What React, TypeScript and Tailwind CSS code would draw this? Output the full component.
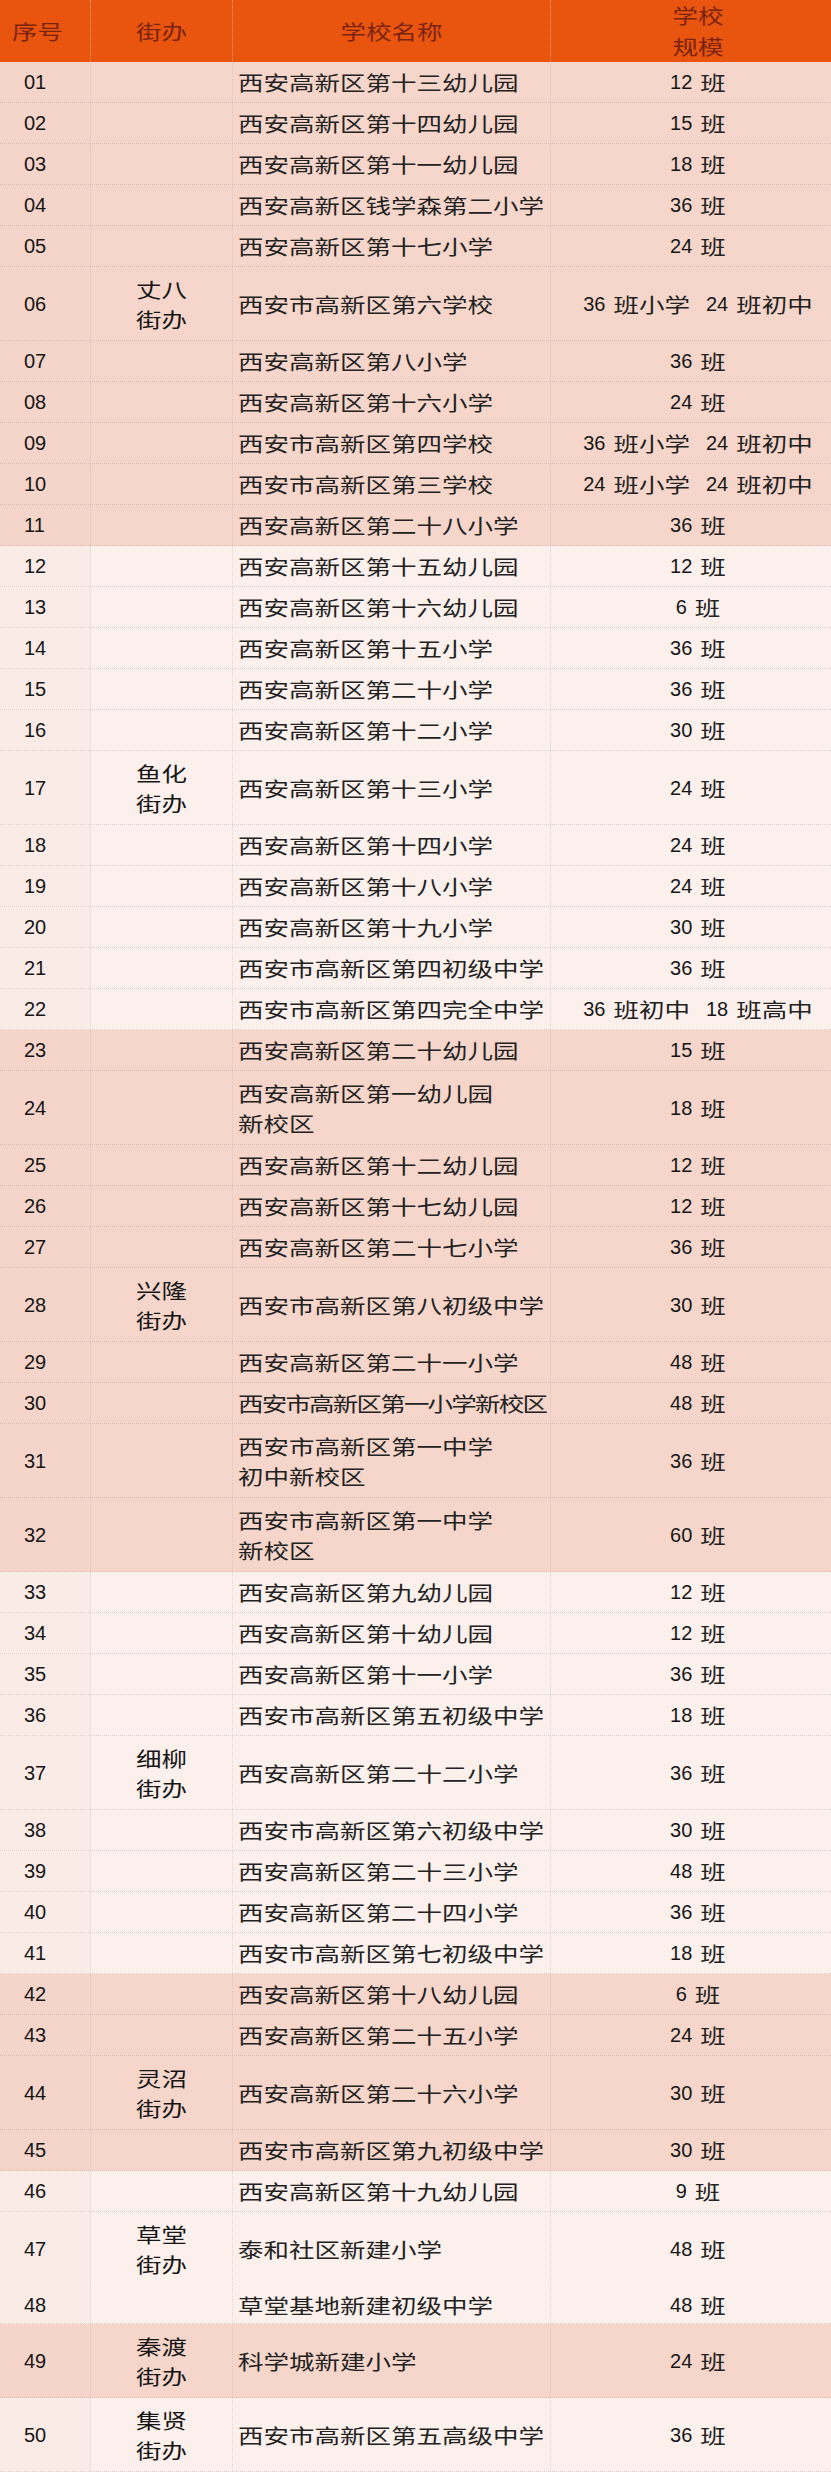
import React from 'react';

type Row = {
  no: string;
  name: string;
  scale: [string, string][];
  district?: string;
  h?: string;
  noLine?: boolean;
  tight?: boolean;
};

const ROWS: Row[] = [
  { no: '01', name: '西安高新区第十三幼儿园', scale: [['12', '班']] },
  { no: '02', name: '西安高新区第十四幼儿园', scale: [['15', '班']] },
  { no: '03', name: '西安高新区第十一幼儿园', scale: [['18', '班']] },
  { no: '04', name: '西安高新区钱学森第二小学', scale: [['36', '班']] },
  { no: '05', name: '西安高新区第十七小学', scale: [['24', '班']] },
  { no: '06', name: '西安市高新区第六学校', scale: [['36', '班小学'], ['24', '班初中']], district: '丈八\n街办' },
  { no: '07', name: '西安高新区第八小学', scale: [['36', '班']] },
  { no: '08', name: '西安高新区第十六小学', scale: [['24', '班']] },
  { no: '09', name: '西安市高新区第四学校', scale: [['36', '班小学'], ['24', '班初中']] },
  { no: '10', name: '西安市高新区第三学校', scale: [['24', '班小学'], ['24', '班初中']] },
  { no: '11', name: '西安高新区第二十八小学', scale: [['36', '班']] },
  { no: '12', name: '西安高新区第十五幼儿园', scale: [['12', '班']] },
  { no: '13', name: '西安高新区第十六幼儿园', scale: [['6', '班']] },
  { no: '14', name: '西安高新区第十五小学', scale: [['36', '班']] },
  { no: '15', name: '西安高新区第二十小学', scale: [['36', '班']] },
  { no: '16', name: '西安高新区第十二小学', scale: [['30', '班']] },
  { no: '17', name: '西安高新区第十三小学', scale: [['24', '班']], district: '鱼化\n街办' },
  { no: '18', name: '西安高新区第十四小学', scale: [['24', '班']] },
  { no: '19', name: '西安高新区第十八小学', scale: [['24', '班']] },
  { no: '20', name: '西安高新区第十九小学', scale: [['30', '班']] },
  { no: '21', name: '西安市高新区第四初级中学', scale: [['36', '班']] },
  { no: '22', name: '西安市高新区第四完全中学', scale: [['36', '班初中'], ['18', '班高中']] },
  { no: '23', name: '西安高新区第二十幼儿园', scale: [['15', '班']] },
  { no: '24', name: '西安高新区第一幼儿园\n新校区', scale: [['18', '班']] },
  { no: '25', name: '西安高新区第十二幼儿园', scale: [['12', '班']] },
  { no: '26', name: '西安高新区第十七幼儿园', scale: [['12', '班']] },
  { no: '27', name: '西安高新区第二十七小学', scale: [['36', '班']] },
  { no: '28', name: '西安市高新区第八初级中学', scale: [['30', '班']], district: '兴隆\n街办' },
  { no: '29', name: '西安高新区第二十一小学', scale: [['48', '班']] },
  { no: '30', name: '西安市高新区第一小学新校区', scale: [['48', '班']], tight: true },
  { no: '31', name: '西安市高新区第一中学\n初中新校区', scale: [['36', '班']] },
  { no: '32', name: '西安市高新区第一中学\n新校区', scale: [['60', '班']] },
  { no: '33', name: '西安高新区第九幼儿园', scale: [['12', '班']] },
  { no: '34', name: '西安高新区第十幼儿园', scale: [['12', '班']] },
  { no: '35', name: '西安高新区第十一小学', scale: [['36', '班']] },
  { no: '36', name: '西安市高新区第五初级中学', scale: [['18', '班']] },
  { no: '37', name: '西安高新区第二十二小学', scale: [['36', '班']], district: '细柳\n街办' },
  { no: '38', name: '西安市高新区第六初级中学', scale: [['30', '班']] },
  { no: '39', name: '西安高新区第二十三小学', scale: [['48', '班']] },
  { no: '40', name: '西安高新区第二十四小学', scale: [['36', '班']] },
  { no: '41', name: '西安市高新区第七初级中学', scale: [['18', '班']] },
  { no: '42', name: '西安高新区第十八幼儿园', scale: [['6', '班']] },
  { no: '43', name: '西安高新区第二十五小学', scale: [['24', '班']] },
  { no: '44', name: '西安高新区第二十六小学', scale: [['30', '班']], district: '灵沼\n街办' },
  { no: '45', name: '西安市高新区第九初级中学', scale: [['30', '班']] },
  { no: '46', name: '西安高新区第十九幼儿园', scale: [['9', '班']] },
  { no: '47', name: '泰和社区新建小学', scale: [['48', '班']], district: '草堂\n街办', noLine: true },
  { no: '48', name: '草堂基地新建初级中学', scale: [['48', '班']], h: 'h-[38px]' },
  { no: '49', name: '科学城新建小学', scale: [['24', '班']], district: '秦渡\n街办' },
  { no: '50', name: '西安市高新区第五高级中学', scale: [['36', '班']], district: '集贤\n街办' },
];

// rows on the darker pink band (one band per street office)
const DARK_GROUPS: [number, number][] = [
  [1, 11],
  [23, 32],
  [42, 45],
  [49, 49],
];

const isDark = (no: string) => {
  const n = Number(no);
  return DARK_GROUPS.some(([a, b]) => n >= a && n <= b);
};

// the source picture is squashed vertically: glyphs keep full width, each line is scaled down in height
function Zh({ text, className = '', line = 'h-[30px] leading-[30px]' }: { text: string; className?: string; line?: string }) {
  return (
    <span className={`flex flex-col whitespace-nowrap font-['Noto_Sans_CJK_SC',sans-serif] text-[25.5px] ${className}`}>
      {text.split('\n').map((l, i) => (
        <span key={i} className={`block scale-y-[0.78] ${line}`}>
          {l}
        </span>
      ))}
    </span>
  );
}

function Header() {
  return (
    <div className="grid h-[62px] grid-cols-[91px_142px_318px_280px] bg-[#e9550f] text-[#7a2311]">
      <div className="flex items-center border-r border-dotted border-[#f2a274] pl-[12px]">
        <Zh text="序号" />
      </div>
      <div className="flex items-center justify-center border-r border-dotted border-[#f2a274]">
        <Zh text="街办" />
      </div>
      <div className="flex items-center justify-center border-r border-dotted border-[#f2a274]">
        <Zh text="学校名称" />
      </div>
      <div className="flex items-center justify-center pl-[14px]">
        <Zh text={'学校\n规模'} line="h-[31px] leading-[31px]" />
      </div>
    </div>
  );
}

function TableRow({ row }: { row: Row }) {
  const dark = isDark(row.no);
  const tall = row.district || row.name.includes('\n');
  const height = row.h ?? (tall ? 'h-[74px]' : 'h-[41px]');
  const bg = dark ? 'bg-[#f6d6cb]' : 'bg-[#fcf0ed]';
  const firstBg = dark ? 'bg-[#f5d4c9]' : 'bg-[#faebe7]';
  const line = row.noLine
    ? ''
    : dark
      ? 'border-b border-dotted border-[#d9bfb6]'
      : 'border-b border-dotted border-[#dfcfcb]';
  const col = dark ? 'border-r border-dotted border-[#e0c6bd]' : 'border-r border-dotted border-[#e6d6d2]';

  return (
    <div className={`grid grid-cols-[91px_142px_318px_280px] ${height} ${bg} ${line}`}>
      <div className={`flex items-center pl-[24px] ${firstBg} ${col}`}>
        <span className="font-['Liberation_Sans',sans-serif] text-[20px] text-[#161616]">{row.no}</span>
      </div>
      <div className={`flex items-center justify-center ${col}`}>
        {row.district && <Zh text={row.district} className="text-[#161616]" />}
      </div>
      <div className={`flex items-center pl-[5px] ${col}`}>
        <Zh text={row.name} className={`text-[#222] ${row.tight ? 'tracking-[-1.8px]' : ''}`} />
      </div>
      <div className="flex items-center justify-center pl-[14px]">
        {row.scale.map(([num, label], i) => (
          <span key={i} className={`flex items-center ${i > 0 ? 'ml-[16px]' : ''}`}>
            <span className="font-['Liberation_Sans',sans-serif] text-[20px] text-[#161616]">{num}</span>
            <Zh text={label} className="ml-[8px] text-[#222]" />
          </span>
        ))}
      </div>
    </div>
  );
}

export default function App() {
  return (
    <div className="w-[831px] bg-white">
      <Header />
      {ROWS.map((row) => (
        <TableRow key={row.no} row={row} />
      ))}
    </div>
  );
}
